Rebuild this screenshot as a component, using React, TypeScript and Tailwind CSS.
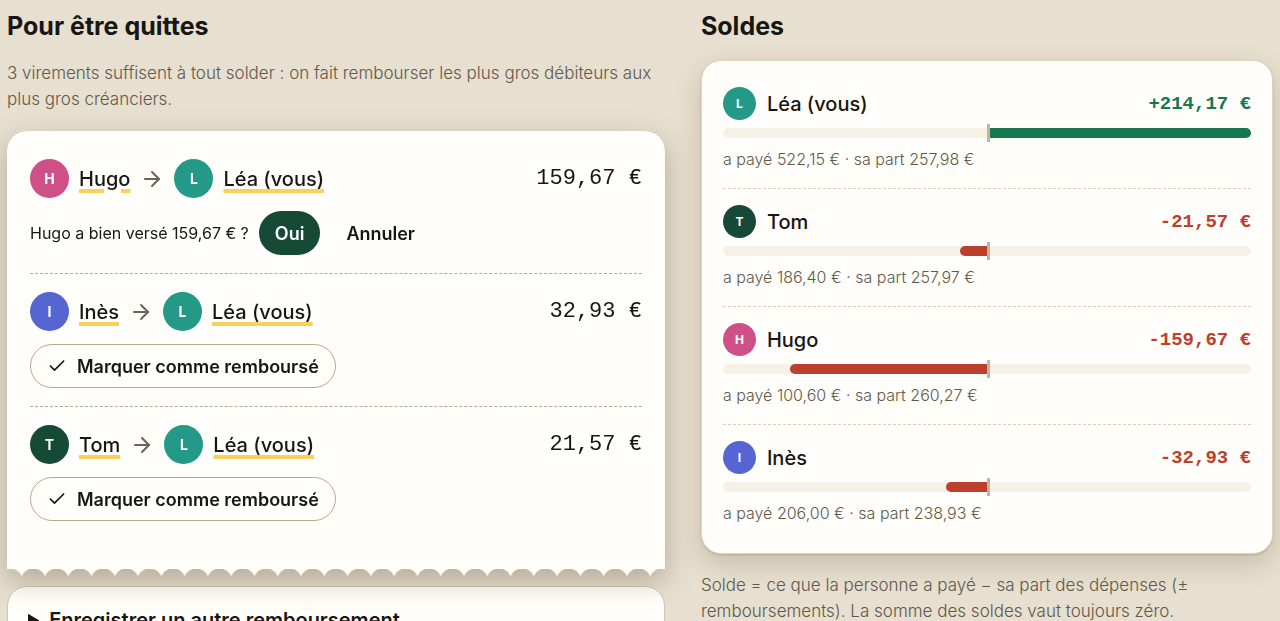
import React, { useState } from "react";
import { ArrowRight, Check } from "lucide-react";

type Person = { name: string; initial: string; color: string };

const LEA: Person = { name: "Léa (vous)", initial: "L", color: "bg-[#249988]" };
const TOM: Person = { name: "Tom", initial: "T", color: "bg-[#164a37]" };
const HUGO: Person = { name: "Hugo", initial: "H", color: "bg-[#cf5089]" };
const INES: Person = { name: "Inès", initial: "I", color: "bg-[#5566d2]" };

const TRANSFERS = [
  { from: HUGO, to: LEA, amount: "159,67 €" },
  { from: INES, to: LEA, amount: "32,93 €" },
  { from: TOM, to: LEA, amount: "21,57 €" },
];

const BALANCES = [
  { person: LEA, value: 214.17, label: "+214,17 €", paid: "522,15 €", share: "257,98 €" },
  { person: TOM, value: -21.57, label: "-21,57 €", paid: "186,40 €", share: "257,97 €" },
  { person: HUGO, value: -159.67, label: "-159,67 €", paid: "100,60 €", share: "260,27 €" },
  { person: INES, value: -32.93, label: "-32,93 €", paid: "206,00 €", share: "238,93 €" },
];

const MAX_BALANCE = 214.17;

function Avatar({ person, small = false }: { person: Person; small?: boolean }) {
  const size = small ? "size-[33px] text-[12px]" : "size-[39px] text-[14px]";
  return (
    <span
      aria-hidden="true"
      className={`${size} ${person.color} flex shrink-0 items-center justify-center rounded-full font-bold text-white`}
    >
      {person.initial}
    </span>
  );
}

function Name({ children }: { children: string }) {
  return (
    <span className="text-[20px] leading-[26px] font-medium underline decoration-[#f8d05a] decoration-4 underline-offset-[3px]">
      {children}
    </span>
  );
}

function Transfer({ from, to, amount, asking, onAsk, onClose }: {
  from: Person;
  to: Person;
  amount: string;
  asking: boolean;
  onAsk: () => void;
  onClose: () => void;
}) {
  return (
    <li className="flex flex-col gap-[13px] border-b border-dashed border-[#b5ab92] py-[18px] last:border-b-0">
      <div className="flex items-center justify-between gap-4">
        <div className="flex items-center gap-[10px]">
          <Avatar person={from} />
          <Name>{from.name}</Name>
          <ArrowRight className="size-6 text-[#6b6456]" strokeWidth={2} aria-label="vers" />
          <Avatar person={to} />
          <Name>{to.name}</Name>
        </div>
        <span className="font-['Liberation_Mono',monospace] text-[22px] leading-[26px] whitespace-nowrap">{amount}</span>
      </div>
      {asking ? (
        <div className="flex items-center gap-[10px]">
          <span className="text-[16px]">
            {from.name} a bien versé {amount} ?
          </span>
          <button type="button" onClick={onClose} className="h-11 rounded-full bg-[#164a37] px-4 text-[18px] font-semibold text-[#fffefa]">
            Oui
          </button>
          <button type="button" onClick={onClose} className="h-11 rounded-full px-4 text-[18px] font-semibold">
            Annuler
          </button>
        </div>
      ) : (
        <button
          type="button"
          onClick={onAsk}
          className="flex h-11 items-center gap-[10px] self-start rounded-full border border-[#b5ab92] px-4 text-[18px] font-semibold"
        >
          <Check className="size-5" strokeWidth={2} aria-hidden="true" />
          Marquer comme remboursé
        </button>
      )}
    </li>
  );
}

function BalanceBar({ value }: { value: number }) {
  const width = `${(Math.abs(value) / MAX_BALANCE) * 50}%`;
  return (
    <div className="relative h-[10px] rounded-full bg-[#f5f1e6]">
      {value >= 0 ? (
        <span className="absolute inset-y-0 left-1/2 rounded-r-full bg-[#17784f]" style={{ width }} />
      ) : (
        <span className="absolute inset-y-0 right-1/2 rounded-l-full bg-[#bc402b]" style={{ width }} />
      )}
      <span className="absolute -inset-y-1 left-1/2 w-[3px] bg-[#bfb5a3]" />
    </div>
  );
}

export default function App() {
  const [asking, setAsking] = useState<string | null>("Hugo");

  return (
    <main className="min-h-screen bg-[#e7dfcf] px-[7px] pt-2 font-[Inter,sans-serif] text-[#171613]">
      <div className="grid grid-cols-[1.15fr_1fr] items-start gap-9">
        <section>
          <h2 className="text-[25px] leading-9 font-bold">Pour être quittes</h2>
          <p className="mt-4 text-[17px] leading-[26px] font-light text-[#5f594c]">
            3 virements suffisent à tout solder : on fait rembourser les plus gros débiteurs aux plus gros créanciers.
          </p>
          <div className="relative z-10 mt-[19px] drop-shadow-[0_10px_14px_rgba(70,60,35,0.32)]">
            <ul className="rounded-t-[20px] bg-[#fffefa] px-[23px] pt-[10px] pb-[38px] [mask-image:linear-gradient(#000_0_0),radial-gradient(circle_at_50%_12px,transparent_12px,#000_13px)] [mask-position:top,bottom] [mask-repeat:no-repeat,repeat-x] [mask-size:100%_calc(100%_-_8px),3.54%_8px]">
              {TRANSFERS.map((t) => (
                <Transfer
                  key={t.from.name}
                  {...t}
                  asking={asking === t.from.name}
                  onAsk={() => setAsking(t.from.name)}
                  onClose={() => setAsking(null)}
                />
              ))}
            </ul>
          </div>
          <details className="mt-[9px] rounded-[20px] border border-[#d0c6b2] bg-[#fffefa] px-5 py-5">
            <summary className="cursor-pointer text-[20px] leading-[26px] font-semibold">
              Enregistrer un autre remboursement
            </summary>
          </details>
        </section>

        <section>
          <h2 className="text-[25px] leading-9 font-bold">Soldes</h2>
          <ul className="mt-4 rounded-[20px] border border-[#ddd4c2] bg-[#fffefa] px-[21px] pt-[10px] pb-[11px] shadow-[0_1px_2px_rgba(70,55,25,0.18),0_10px_26px_rgba(70,55,25,0.2)]">
            {BALANCES.map(({ person, value, label, paid, share }) => (
              <li key={person.name} className="flex flex-col gap-2 border-b border-dashed border-[#d8d0bc] py-4 last:border-b-0">
                <div className="flex items-center gap-[11px]">
                  <Avatar person={person} small />
                  <span className="text-[20px] leading-[26px] font-medium">{person.name}</span>
                  <span
                    className={`${value >= 0 ? "text-[#17784f]" : "text-[#bc402b]"} ml-auto font-['Liberation_Mono',monospace] text-[19px] leading-[26px] font-bold`}
                  >
                    {label}
                  </span>
                </div>
                <BalanceBar value={value} />
                <p className="text-[16px] leading-[26px] font-light text-[#5f594c]">
                  a payé {paid} · sa part {share}
                </p>
              </li>
            ))}
          </ul>
          <p className="mt-[18px] text-[17px] leading-[26px] font-light text-[#5f594c]">
            Solde = ce que la personne a payé − sa part des dépenses (± remboursements). La somme des soldes vaut toujours zéro.
          </p>
        </section>
      </div>
    </main>
  );
}
